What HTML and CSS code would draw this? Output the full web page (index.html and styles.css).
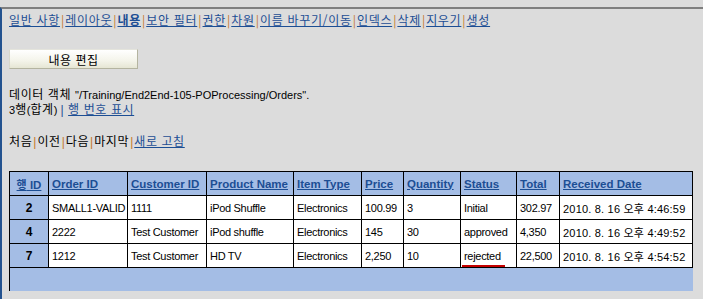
FILE: index.html
```html
<!DOCTYPE html>
<html lang="ko">
<head>
    <meta charset="UTF-8">
    <title>데이터 객체 - 내용</title>
    <link rel="stylesheet" href="styles.css">
</head>
<body>
    <div class="frame">
        <div class="tabs">
            <a href="#">일반 사항</a><span class="sep">|</span><a href="#">레이아웃</a><span class="sep">|</span><a href="#" class="current">내용</a><span class="sep">|</span><a href="#">보안 필터</a><span class="sep">|</span><a href="#">권한</a><span class="sep">|</span><a href="#">차원</a><span class="sep">|</span><a href="#">이름 바꾸기/이동</a><span class="sep">|</span><a href="#">인덱스</a><span class="sep">|</span><a href="#">삭제</a><span class="sep">|</span><a href="#">지우기</a><span class="sep">|</span><a href="#">생성</a>
        </div>

        <button type="button" class="edit-btn">내용 편집</button>

        <div class="info">
            <div>데이터 객체 <span class="path">"/Training/End2End-105-POProcessing/Orders".</span></div>
            <div><span class="path">3</span>행<span class="path">(</span>합계<span class="path">) </span><span class="bar">|</span> <a href="#">행 번호 표시</a></div>
        </div>

        <div class="pager">
            처음<span class="sep">|</span>이전<span class="sep">|</span>다음<span class="sep">|</span>마지막<span class="sep">|</span><a href="#">새로 고침</a>
        </div>

        <table class="grid">
            <colgroup>
                <col style="width: 39px">
                <col style="width: 79px">
                <col style="width: 79px">
                <col style="width: 87px">
                <col style="width: 68px">
                <col style="width: 42px">
                <col style="width: 57px">
                <col style="width: 56px">
                <col style="width: 43px">
                <col style="width: 133px">
            </colgroup>
            <thead>
                <tr>
                    <th class="rownum"><a href="#"><span class="ko">행</span> ID</a></th>
                    <th><a href="#">Order ID</a></th>
                    <th><a href="#">Customer ID</a></th>
                    <th><a href="#">Product Name</a></th>
                    <th><a href="#">Item Type</a></th>
                    <th><a href="#">Price</a></th>
                    <th><a href="#">Quantity</a></th>
                    <th><a href="#">Status</a></th>
                    <th><a href="#">Total</a></th>
                    <th><a href="#">Received Date</a></th>
                </tr>
            </thead>
            <tbody>
                <tr>
                    <td class="rownum">2</td>
                    <td>SMALL1-VALID</td>
                    <td>1111</td>
                    <td>iPod Shuffle</td>
                    <td>Electronics</td>
                    <td>100.99</td>
                    <td>3</td>
                    <td>Initial</td>
                    <td>302.97</td>
                    <td class="date">2010. 8. 16 오후 4:46:59</td>
                </tr>
                <tr>
                    <td class="rownum">4</td>
                    <td>2222</td>
                    <td>Test Customer</td>
                    <td>iPod shuffle</td>
                    <td>Electronics</td>
                    <td>145</td>
                    <td>30</td>
                    <td>approved</td>
                    <td>4,350</td>
                    <td class="date">2010. 8. 16 오후 4:49:52</td>
                </tr>
                <tr>
                    <td class="rownum">7</td>
                    <td>1212</td>
                    <td>Test Customer</td>
                    <td>HD TV</td>
                    <td>Electronics</td>
                    <td>2,250</td>
                    <td>10</td>
                    <td><span class="marked">rejected</span></td>
                    <td>22,500</td>
                    <td class="date">2010. 8. 16 오후 4:54:52</td>
                </tr>
            </tbody>
            <tfoot>
                <tr>
                    <td colspan="10"></td>
                </tr>
            </tfoot>
        </table>
    </div>
</body>
</html>
```

FILE: styles.css
```css
body {
    margin: 0;
    background: #dcdcdc;
    font-family: "Liberation Sans", "Noto Sans CJK KR", sans-serif;
    font-size: 12px;
    color: #000;
}

a {
    color: #1c4e94;
}

.frame {
    margin-top: 7px;
    border-top: 2px solid #7f7f7f;
    border-left: 2px solid #23528f;
    padding: 3px 0 8px 7px;
    min-height: 280px;
}

/* 탭 링크 */
.tabs {
    font-family: "Noto Sans CJK KR", sans-serif;
    font-size: 12px;
    line-height: 16px;
    letter-spacing: 0.7px;
    white-space: nowrap;
}

.tabs .current {
    font-weight: bold;
}

.sep {
    color: #c4782a;
    margin: 0 1px;
    letter-spacing: 0;
}

.edit-btn {
    display: block;
    margin-top: 21px;
    width: 129px;
    height: 20px;
    padding: 0;
    font-family: "Noto Sans CJK KR", sans-serif;
    font-size: 12px;
    letter-spacing: 0.5px;
    color: #000;
    background: linear-gradient(#ffffff, #f4f4ea 60%, #e6e6d4);
    border: 1px solid #b4b4a0;
    border-top-color: #e4e4dc;
    border-left-color: #d8d8cc;
}

.info {
    margin-top: 19px;
    line-height: 15px;
    letter-spacing: 0.6px;
}

.path {
    font-size: 11px;
    letter-spacing: 0;
}

.bar {
    color: #1c4e94;
}

.pager {
    margin-top: 17px;
    line-height: 15px;
    letter-spacing: 0.6px;
}

/* 데이터 표 */
.grid {
    margin-top: 21px;
    width: 683px;
    table-layout: fixed;
    border-collapse: collapse;
    background: #a4bde5;
    font-size: 11px;
}

.grid th {
    height: 23px;
    padding: 0 3px;
    text-align: left;
    font-size: 11.5px;
    white-space: nowrap;
    overflow: hidden;
    border: 1px solid #000;
    border-bottom: none;
}

.grid th.rownum {
    text-align: center;
    padding: 0;
}

.grid th .ko {
    font-family: "Noto Sans CJK KR", sans-serif;
    font-size: 11px;
}

.grid td {
    height: 23px;
    padding: 0 3px;
    background: #fff;
    border: 1px solid #000;
    white-space: nowrap;
    overflow: hidden;
    letter-spacing: -0.3px;
}

.grid td.date {
    letter-spacing: 0.2px;
}

.grid td.rownum {
    background: #a4bde5;
    text-align: center;
    font-weight: bold;
    font-size: 12px;
    letter-spacing: 0;
}

.grid tfoot td {
    background: #a4bde5;
    border: none;
    border-left: 1px solid #000;
}

/* 빨간 밑줄 표시 */
.marked {
    position: relative;
}

.marked::after {
    content: "";
    position: absolute;
    left: -2px;
    right: -4px;
    top: calc(100% + 3px);
    height: 2px;
    background: #c40000;
    box-shadow: 4px 4px 3px rgba(50, 60, 90, 0.55);
}
```
